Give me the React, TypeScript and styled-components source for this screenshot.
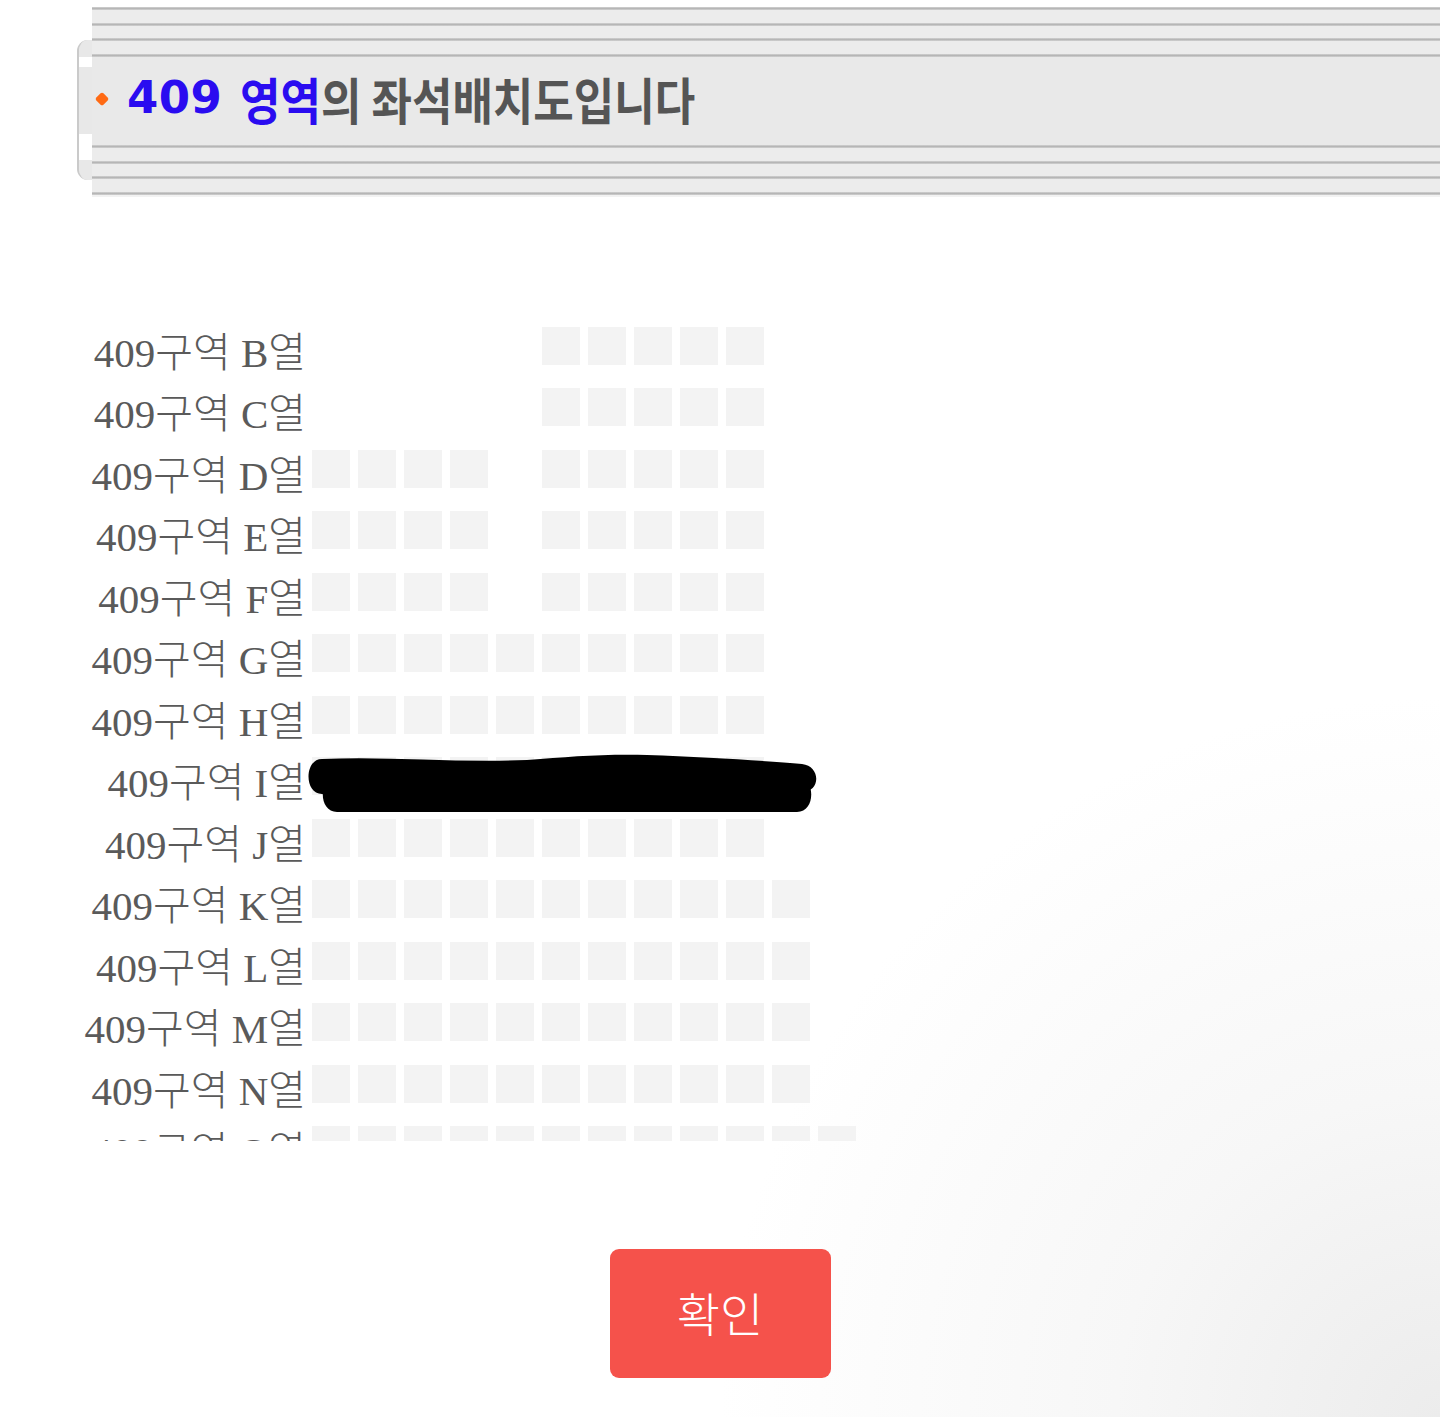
import React from "react";
import styled, { createGlobalStyle } from "styled-components";

type SeatRowData = { row: string; seats: number[]; hidden?: boolean };

const range = (from: number, to: number) =>
  Array.from({ length: to - from + 1 }, (_, i) => from + i);

const ROWS: SeatRowData[] = [
  { row: "B", seats: range(5, 9) },
  { row: "C", seats: range(5, 9) },
  { row: "D", seats: [...range(0, 3), ...range(5, 9)] },
  { row: "E", seats: [...range(0, 3), ...range(5, 9)] },
  { row: "F", seats: [...range(0, 3), ...range(5, 9)] },
  { row: "G", seats: range(0, 9) },
  { row: "H", seats: range(0, 9) },
  { row: "I", seats: range(0, 9), hidden: true },
  { row: "J", seats: range(0, 9) },
  { row: "K", seats: range(0, 10) },
  { row: "L", seats: range(0, 10) },
  { row: "M", seats: range(0, 10) },
  { row: "N", seats: range(0, 10) },
  { row: "O", seats: range(0, 11) },
];

const GlobalStyle = createGlobalStyle`
  html, body {
    margin: 0;
    padding: 0;
    background: #fff;
  }
`;

//scribble someone drew over row I, kept as a drawing
const Scribble = () => (
  <ScribbleSvg width="515" height="65" viewBox="0 0 515 65">
    <path d="M15 8 C80 5 150 12 220 9 C262 6 292 3 340 4 C400 6 460 10 495 13 C514 15 514 41 495 41 L15 43 C-3 43 -3 8 15 8 Z" />
    <path d="M30 26 L490 26 C509 26 509 61 490 61 L30 61 C11 61 11 26 30 26 Z" />
  </ScribbleSvg>
);

export default function App() {
  const stripes = [0, 1, 2];
  return (
    <Page>
      <GlobalStyle />
      <Header>
        <LeftCap>
          <CapPiece $h={17} />
          <CapGap $h={10} />
          <CapPiece $h={67} />
          <CapGap $h={26} />
          <CapPiece $h={20} />
        </LeftCap>
        <Band>
          <Rule />
          {stripes.map((i) => (
            <React.Fragment key={`t${i}`}>
              <Stripe />
              <Rule />
            </React.Fragment>
          ))}
          <TitleBar>
            <Diamond />
            <Num>409</Num>
            <Hangul>
              <Blue>영역</Blue>의 좌석배치도입니다
            </Hangul>
          </TitleBar>
          <Rule />
          {stripes.map((i) => (
            <React.Fragment key={`b${i}`}>
              <Stripe />
              <Rule />
            </React.Fragment>
          ))}
          <Tail />
        </Band>
      </Header>

      <Viewport>
        {ROWS.map((r) => (
          <Row key={r.row}>
            <Label>409구역 {r.row}열</Label>
            <Seats>
              {range(0, 11).map((c) => (
                <Seat key={c} $empty={!r.seats.includes(c)} />
              ))}
              {r.hidden && <Scribble />}
            </Seats>
          </Row>
        ))}
      </Viewport>

      <Footer>
        <ConfirmButton>확인</ConfirmButton>
      </Footer>
    </Page>
  );
}

const Page = styled.div`
  min-height: 1417px;
  width: 1440px;
  overflow: hidden;
  background: radial-gradient(
    720px circle at 100% 100%,
    #ececec 0%,
    #f7f7f7 45%,
    #ffffff 100%
  );
`;

const Header = styled.header`
  display: flex;
  align-items: flex-start;
  padding-left: 77px;
  padding-top: 7px;
`;

const LeftCap = styled.div`
  width: 13px;
  margin-top: 33px;
  display: flex;
  flex-direction: column;
  border-left: 2px solid #cacaca;
  border-radius: 11px 0 0 11px;
  overflow: hidden;
  box-shadow: inset 0 2px 0 #d0d0d0, inset 0 -2px 0 #d0d0d0;
`;

const CapPiece = styled.div<{ $h: number }>`
  height: ${(p) => p.$h}px;
  background: #e8e8e8;
`;

const CapGap = styled.div<{ $h: number }>`
  height: ${(p) => p.$h}px;
  background: #fff;
`;

const Band = styled.div`
  flex: 1;
  display: flex;
  flex-direction: column;
`;

const Rule = styled.div`
  height: 3px;
  background: linear-gradient(#d2d2d2, #b6b6b6 50%, #d2d2d2);
`;

const Stripe = styled.div`
  height: 12.5px;
  background: #ececec;
`;

const Tail = styled.div`
  height: 2px;
  background: #f2f2f2;
`;

const TitleBar = styled.div`
  height: 88.5px;
  background: #e9e9e9;
  display: flex;
  align-items: center;
  padding-left: 4px;
  padding-bottom: 6px;
  box-sizing: border-box;
`;

const Diamond = styled.span`
  width: 10px;
  height: 10px;
  border-radius: 2px;
  background: #ff6a14;
  transform: rotate(45deg);
  margin: 2px 20px 0 1px;
`;

const Num = styled.span`
  font-family: "DejaVu Sans", "Noto Sans CJK KR", sans-serif;
  font-weight: 700;
  font-size: 45px;
  color: #2a0cf0;
  letter-spacing: 0.5px;
  margin-right: 18px;
`;

const Hangul = styled.span`
  display: inline-block;
  font-family: "Noto Sans CJK KR", sans-serif;
  font-weight: 700;
  font-size: 50px;
  color: #555;
  white-space: nowrap;
  transform: scaleX(0.88);
  transform-origin: left center;
`;

const Blue = styled.span`
  color: #2a0cf0;
`;

const Viewport = styled.section`
  margin-top: 105px;
  height: 839px;
  padding-top: 25px;
  box-sizing: border-box;
  overflow: hidden;
`;

const Row = styled.div`
  display: flex;
  align-items: flex-start;
  height: 61.5px;
  padding-left: 80px;
`;

const Label = styled.div`
  width: 226px;
  margin-right: 6px;
  margin-top: 4px;
  text-align: right;
  font-family: "Liberation Serif", "Noto Sans CJK KR", serif;
  font-weight: 300;
  font-size: 41px;
  line-height: 44px;
  color: #5a5a5a;
  white-space: nowrap;
`;

const Seats = styled.div`
  position: relative;
  display: flex;
  gap: 8px;
`;

const Seat = styled.div<{ $empty: boolean }>`
  width: 38px;
  height: 38px;
  background: ${(p) => (p.$empty ? "transparent" : "#f3f3f3")};
`;

const ScribbleSvg = styled.svg`
  position: absolute;
  left: -5px;
  top: -6px;
  fill: #000;
`;

const Footer = styled.div`
  display: flex;
  justify-content: center;
  padding-top: 108px;
`;

const ConfirmButton = styled.button`
  width: 221px;
  height: 129px;
  border: none;
  border-radius: 9px;
  background: #f5524b;
  color: #fff;
  font-family: "Noto Sans CJK KR", sans-serif;
  font-weight: 300;
  font-size: 47px;
  padding: 0 0 4px;
  cursor: pointer;
`;
